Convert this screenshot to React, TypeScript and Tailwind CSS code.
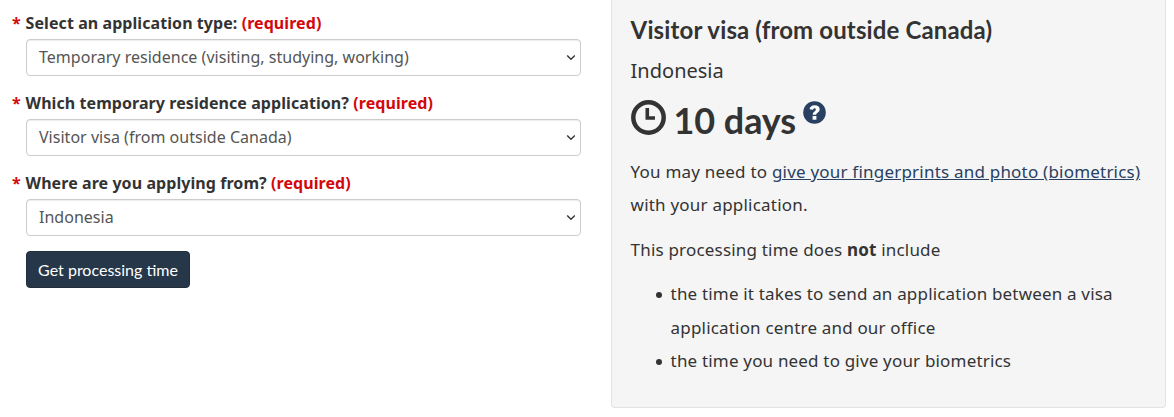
import React from "react";

function Field({ label, value }: { label: string; value: string }) {
  return (
    <div className="h-20">
      <div className="flex h-[22px] items-center gap-[5px] text-[16px] font-bold leading-[22px] tracking-[0.07px] text-[#333]">
        <span className="w-[9px] text-[#d3080c]">*</span>
        <span className="ml-[-0.4px] whitespace-nowrap">
          {label} <span className="text-[#d3080c]">(required)</span>
        </span>
      </div>
      <div className="ml-[14px] mt-[5px] flex h-[37px] w-[555px] items-center justify-between rounded-[4px] border border-[#ccc] bg-white pl-3 pr-1 text-[16px] text-[#555] shadow-[inset_0_1px_1px_rgba(0,0,0,0.075)]">
        <span className="pb-[2px] tracking-[0.02px]">{value}</span>
        <svg width="10" height="7" viewBox="0 0 10 7" fill="none" stroke="#333" strokeWidth="1.3">
          <path d="M1.2 1.5 5 5.3 8.8 1.5" />
        </svg>
      </div>
    </div>
  );
}

function Bullet({ children }: { children: React.ReactNode }) {
  return (
    <li className="flex">
      <span className="ml-[25px] mr-[9px] mt-[15px] size-[6px] shrink-0 rounded-full bg-[#333]" />
      <span>{children}</span>
    </li>
  );
}

export default function App() {
  return (
    <div className="flex h-[417px] w-[1174px] overflow-hidden bg-white font-['Noto_Sans',sans-serif] text-[#333]">
      <div className="w-[611px] pl-3 pt-3">
        <Field label="Select an application type:" value="Temporary residence (visiting, studying, working)" />
        <Field label="Which temporary residence application?" value="Visitor visa (from outside Canada)" />
        <Field label="Where are you applying from?" value="Indonesia" />
        <button className="ml-[14px] mt-[-1px] h-[37px] w-[164px] rounded-[4px] border border-[#222e3c] bg-[#26374a] font-['Lato',sans-serif] text-[16px] text-white">
          Get processing time
        </button>
      </div>
      <div className="h-[408px] w-[555px] rounded-b-[4px] border border-t-0 border-[#e3e3e3] bg-[#f5f5f5] pl-[18.6px]">
        <h2 className="pt-[14px] font-['Lato',sans-serif] text-[24px] font-bold leading-8 tracking-[0.13px]">Visitor visa (from outside Canada)</h2>
        <p className="mt-[10px] text-[20px] leading-[30px]">Indonesia</p>
        <div className="mt-2 flex h-[54px] font-['Lato',sans-serif] text-[36px] font-bold">
          <svg className="mt-[6px]" width="35" height="35" viewBox="0 0 35 35" fill="none" stroke="#333">
            <circle cx="17.5" cy="17.5" r="15.2" strokeWidth="4.5" />
            <path d="M16.3 8v10H24" strokeWidth="3.6" />
          </svg>
          <span className="ml-[8px] leading-[52px] tracking-[-0.1px]">10 days</span>
          <svg className="ml-[7px] mt-[7px]" width="23" height="23" viewBox="0 0 23 23">
            <circle cx="11.5" cy="11.5" r="11.3" fill="#284162" />
            <path d="M6.5 8.2C7 5.5 9 4.2 11.6 4.2c2.9 0 5.1 1.5 5.1 4 0 3.3-3.5 3.3-3.5 5.6H9.7c0-3.3 3.1-3.6 3.1-5.4 0-.8-.5-1.2-1.2-1.2-.8 0-1.4.6-1.6 1.5Z" fill="#fff" />
            <rect x="9.6" y="15" width="3.8" height="3.7" fill="#fff" />
          </svg>
        </div>
        <p className="mt-[7px] text-[17px] leading-[33px] tracking-[0.21px]">
          You may need to{" "}
          <a className="text-[#284162] underline">give your fingerprints and photo (biometrics)</a>
          <br />
          with your application.
        </p>
        <p className="mt-3 text-[17px] leading-[33px] tracking-[0.19px]">
          This processing time does <b>not</b> include
        </p>
        <ul className="mt-[11px] text-[17px] leading-[33.5px] tracking-[0.18px]">
          <Bullet>
            the time it takes to send an application between a visa
            <br />
            application centre and our office
          </Bullet>
          <Bullet>the time you need to give your biometrics</Bullet>
        </ul>
      </div>
    </div>
  );
}
